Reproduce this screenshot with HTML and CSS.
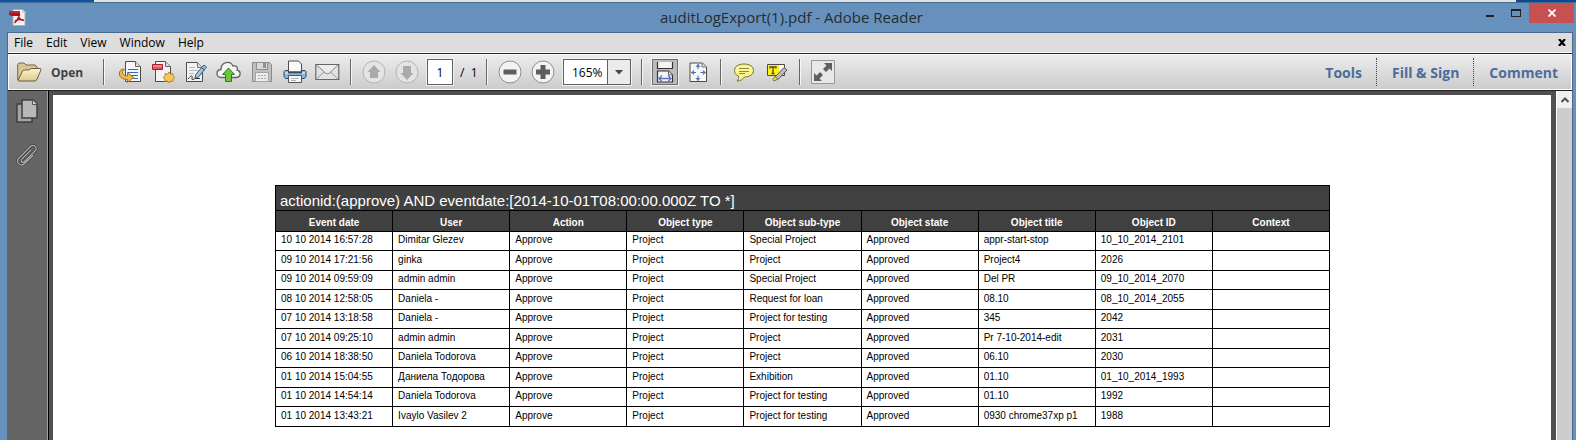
FILE: index.html
```html
<!DOCTYPE html>
<html lang="en">
<head>
<meta charset="utf-8">
<title>auditLogExport(1).pdf - Adobe Reader</title>
<link rel="stylesheet" href="styles.css">
</head>
<body>
<div class="desktop"></div>
<div class="window">
  <header class="titlebar">
    <svg class="app-icon" width="17" height="17" viewBox="0 0 17 17"><path d="M4 .5h9l3 3v13H4z" fill="#f8f4f4" stroke="#b9a9ae"/><path d="M13 0l4 4h-4z" fill="#d8d0d4"/><path d="M0 2h11v5H2L0 5.500z" fill="#b0141c"/><path d="M0 2h11v2H0z" fill="#c92a30"/><path d="M9.500 5c1 2-.5 6-4 9M9.500 6c.2 3 2 5 5.500 5.500M6 12c2-1.500 5-2 9-.8" fill="none" stroke="#a8101a" stroke-width="1.400"/></svg>
    <h1 class="title">auditLogExport(1).pdf - Adobe Reader</h1>
    <div class="controls">
      <button class="control" aria-label="Minimize"><svg width="10" height="10"><path d="M1 7h8v2H1z" fill="#222"/></svg></button>
      <button class="control" aria-label="Maximize"><svg width="10" height="10"><path d="M0 1h10v8H0zM1 3v5h8V3z" fill="#222" fill-rule="evenodd"/></svg></button>
      <button class="control close" aria-label="Close"><svg width="8" height="8"><path d="M.5 .5l7 7m0-7l-7 7" stroke="#fff" stroke-width="1.800"/></svg></button>
    </div>
  </header>
  <div class="frame">
    <nav class="menubar">
      <button class="menu">File</button><button class="menu">Edit</button><button class="menu">View</button><button class="menu">Window</button><button class="menu">Help</button>
      <button class="doc-close" aria-label="Close document"><svg width="8" height="7"><path d="M1 0l6 7M7 0L1 7" stroke="#000" stroke-width="2.200"/></svg></button>
    </nav>
    <div class="toolbar">
      <button class="open">
        <svg width="25" height="20" viewBox="0 0 25 20"><defs><linearGradient id="fold" x2="0" y2="1"><stop stop-color="#fdf6cf"/><stop offset="1" stop-color="#dfc98a"/></linearGradient></defs><path d="M.7 18V2.500L2 1h5l2 2h9l2 2v4" fill="#d8c692" stroke="#75664a"/><path d="M1 18.500L5.500 9l1.500-1h5l2-1.500h9.500L24 8l-4.500 10-1 1H1.500z" fill="url(#fold)" stroke="#6b5d42"/></svg>
        <span>Open</span>
      </button>
      <span class="sep"></span>
      <div class="group">
        <button class="tool" aria-label="Convert file"><svg width="24" height="24" viewBox="0 0 24 24"><path d="M7.500 1.500h10l5 5v15h-15z" fill="#f5f7fa" stroke="#4c4c4c"/><path d="M17.500 1.500v5h5" fill="#ddd" stroke="#666"/><path d="M10 9.500h10M10 12.500h10M12 15.500h8M15 18.500h5" stroke="#2c6fb7" stroke-width="1.200"/><path d="M4.500 9C2 10 1 12 1.500 15c.7 3 4 4.500 8 4.500v3l6-5-6-5v3.500C6 16 4 14.500 4.500 11l2-1.500z" fill="#f3bc42" stroke="#a66e18"/></svg></button>
        <button class="tool" aria-label="Create PDF"><svg width="24" height="24" viewBox="0 0 24 24"><path d="M4.500 1.500h10l5 5v15h-15z" fill="#f3f3f3" stroke="#4c4c4c"/><path d="M14.500 1.500v5h5" fill="#ddd" stroke="#666"/><path d="M1.500 4.500h10v5h-10z" fill="#ee5059" stroke="#9d252d"/><path d="M2 5h9v2H2z" fill="#f58086"/><path d="M18 12l1.500 2.200 2.500-.7v2.600l2 1.400-2 1.500v2.500l-2.500-.5L18 23l-1.500-2-2.500.5V19l-2-1.500 2-1.400v-2.600l2.500.7z" fill="#f5c85a" stroke="#b07b20" stroke-width=".8"/></svg></button>
        <button class="tool" aria-label="Sign"><svg width="24" height="24" viewBox="0 0 24 24"><path d="M2.500 2.500h11l5 5v14h-16z" fill="#f3f3f3" stroke="#4c4c4c"/><path d="M13.500 2.500v5h5" fill="#ddd" stroke="#777"/><path d="M5 7.500h6M5 10.500h9M5 13.500h5" stroke="#b8b8b8"/><path d="M4 19c3-4 5-4 4-1s2 .5 4 .5h4" fill="none" stroke="#333"/><path d="M20 5l2.500 2-8 10-3.500 1.500.8-4z" fill="#a9c8e4" stroke="#34536f"/><path d="M18 8l2.500 2" stroke="#34536f"/></svg></button>
        <button class="tool" aria-label="Upload"><svg width="25" height="24" viewBox="0 0 25 24"><path d="M6 17.500C-.5 17.500-.5 10 5 9.500 5 2 14 0 17 6c4-1 5 2 4 4 4.500 1 4 7.500-1 7.500z" fill="#f4f4f4" stroke="#646464" stroke-width="1.300"/><path d="M12.500 8l6 6.500h-3v7h-6v-7h-3z" fill="#6fc638" stroke="#2f7c16"/></svg></button>
        <button class="tool" aria-label="Save" disabled><svg width="24" height="24" viewBox="0 0 24 24"><path d="M2.500 2.500h17l2 2v17h-19z" fill="#bfbfbf" stroke="#8b8b8b"/><path d="M6.500 2.500h11v7h-11z" fill="#d9d9d9" stroke="#8f8f8f"/><path d="M13 3h3v5h-3z" fill="#8f8f8f"/><path d="M5.500 12.500h13v9h-13z" fill="#ececec" stroke="#a5a5a5"/><path d="M8 15.500h8M8 18.500h8" stroke="#aaa" stroke-dasharray="2 1"/></svg></button>
        <button class="tool" aria-label="Print"><svg width="24" height="24" viewBox="0 0 24 24"><path d="M2 10.500h20l1 1v5l-1.500 2h-19l-1.500-2v-5z" fill="#8fb5db" stroke="#354d64"/><path d="M2 12h20v2H2z" fill="#c4dcf0"/><path d="M5.500 1h10l3 3v8h-13z" fill="#fafafa" stroke="#4b4b4b"/><path d="M5 12.500h14" stroke="#3f4d5a" stroke-width="2"/><path d="M5.500 15.500h13v7h-13z" fill="#f7f7f7" stroke="#555"/><path d="M8 18.500h8M8 20.500h5" stroke="#b3b3b3"/></svg></button>
        <button class="tool" aria-label="Email"><svg width="25" height="24" viewBox="0 0 25 24"><path d="M.8 4.500h23v15H.8z" fill="#e1e1e1" stroke="#666" stroke-width="1.200"/><path d="M1.500 19l8-7.500M23 19l-8-7.500" stroke="#999"/><path d="M1.500 5l9 8q2 1.500 4 0l8.500-8" fill="#ededed" stroke="#858585"/></svg></button>
      </div>
      <span class="sep"></span>
      <div class="group">
        <button class="tool" aria-label="Previous page" disabled><svg width="24" height="24" viewBox="0 0 24 24"><circle cx="12" cy="12" r="11" fill="#e4e4e4" stroke="#b3b3b3"/><path d="M12 5l6.500 7H16v6H8v-6H5.500z" fill="#aaa"/></svg></button>
        <button class="tool" aria-label="Next page" disabled><svg width="24" height="24" viewBox="0 0 24 24"><circle cx="12" cy="12" r="11" fill="#e4e4e4" stroke="#b3b3b3"/><path d="M12 20l6.500-7H16V6H8v7H5.500z" fill="#aaa"/></svg></button>
        <input class="page-number" type="text" value="1" aria-label="Page number">
        <span class="page-total">/&nbsp; 1</span>
      </div>
      <span class="sep"></span>
      <div class="group">
        <button class="tool" aria-label="Zoom out"><svg width="24" height="24" viewBox="0 0 24 24"><circle cx="12" cy="12" r="11" fill="#f3f3f3" stroke="#8e8e8e"/><path d="M5.500 9.500h13v5h-13z" fill="#5d5d5d"/></svg></button>
        <button class="tool" aria-label="Zoom in"><svg width="24" height="24" viewBox="0 0 24 24"><circle cx="12" cy="12" r="11" fill="#f3f3f3" stroke="#8e8e8e"/><path d="M9.500 5h5v4.500H19v5h-4.500V19h-5v-4.500H5v-5h4.500z" fill="#5d5d5d"/></svg></button>
        <div class="zoom">
          <select class="zoom-level" aria-label="Zoom level"><option>165%</option></select>
          <span class="zoom-arrow"><svg width="8" height="5"><path d="M0 0h8L4 4.500z" fill="#444"/></svg></span>
        </div>
      </div>
      <span class="sep"></span>
      <div class="group">
        <button class="tool pressed" aria-label="Fit width"><svg width="24" height="24" viewBox="0 0 24 24"><path d="M4.500 2v6.500h15V2" fill="#f4f4f4" stroke="#333" stroke-width="1.200"/><path d="M4.500 22v-11h11l4 4v7z" fill="#f4f4f4" stroke="#333" stroke-width="1.200"/><path d="M15.500 11v4h4" fill="#ddd" stroke="#666"/><path d="M6 18.500h12M9 15.500l-3 3 3 3M15 15.500l3 3-3 3" fill="none" stroke="#5a75b8" stroke-width="1.300"/></svg></button>
        <button class="tool" aria-label="Fit page"><svg width="24" height="24" viewBox="0 0 24 24"><path d="M4 3h12.500l4 4v14.500H4z" fill="#f7f7f7" stroke="#4b4b4b"/><path d="M16 3v4h4" fill="#ddd" stroke="#777"/><path d="M12 4v5M12 15.500v5M5 12.500h5M14.500 12.500h5" stroke="#4868ad"/><path d="M9.500 7L12 4l2.500 3zM9.500 18l2.500 3 2.500-3zM8 10l-3 2.500L8 15zM17 10l3 2.500-3 2.500z" fill="#5b78ba"/></svg></button>
      </div>
      <span class="sep"></span>
      <div class="group">
        <button class="tool" aria-label="Add comment"><svg width="24" height="24" viewBox="0 0 24 24"><path d="M12 4c6 0 9.500 2.800 9.500 6.500S18 17 12.500 17c-2 2.500-4 4-7.500 4 1.500-1.500 2-3 1.500-5C4 15 2.500 13 2.500 10.500 2.500 6.800 6 4 12 4z" fill="#fbf58e" stroke="#77713c"/><path d="M7 8.500h10M7 11.500h10M7 13.500h6" stroke="#8d8751"/></svg></button>
        <button class="tool" aria-label="Highlight text"><svg width="24" height="24" viewBox="0 0 24 24"><path d="M2.500 4.500h17v11h-17z" fill="#fafafa" stroke="#4b4b4b"/><path d="M3 5h11v10H3z" fill="#fff21c"/><path d="M5 7h6v1.500M8 7v6.500M6.500 13.500h3M5 6.500v2" fill="none" stroke="#514811" stroke-width="1.300"/><path d="M19 7.500l3 2.500-9 9.500-3-2.500z" fill="#bbb" stroke="#555"/><path d="M10 16.500l3 2.500-4 2-1-1.500z" fill="#f2e533" stroke="#77713c"/></svg></button>
      </div>
      <span class="sep"></span>
      <button class="tool" aria-label="Read mode"><svg width="24" height="24" viewBox="0 0 24 24"><path d="M.5 .5h23v23H.5z" fill="#e8e8e8" stroke="#979797"/><path d="M13 3h8v8l-2.500-2.500-3.500 3.500-3-3 3.500-3.500zM3 21v-8l2.500 2.500L9 12l3 3-3.500 3.500L11 21z" fill="#606060"/></svg></button>
      <div class="panels">
        <button class="panel">Tools</button>
        <button class="panel">Fill &amp; Sign</button>
        <button class="panel">Comment</button>
      </div>
    </div>
    <div class="workspace">
      <aside class="sidebar">
        <button class="side" aria-label="Page thumbnails"><svg width="22" height="24" viewBox="0 0 22 24"><path d="M1 5h15v18H1z" fill="#a5a5a5" stroke="#3f3f3f" stroke-width="1.500"/><path d="M6 1h11l4 4v14H6z" fill="#b8b8b8" stroke="#3f3f3f" stroke-width="1.500"/><path d="M16.500 1v4.500H21" fill="#d0d0d0" stroke="#555"/></svg></button>
        <button class="side" aria-label="Attachments"><svg width="22" height="24" viewBox="0 0 22 24"><g fill="none" stroke-linecap="round"><path d="M15 7L6 16c-2 2.500.5 4.500 2.500 2.500L19 8c3-3.500-1-7.500-4.500-4.500L3 15c-4 4.500 1.500 9.500 5.500 5.500L17 12.500" stroke="#3c3c3c" stroke-width="2.600"/><path d="M15 7L6 16c-2 2.500.5 4.500 2.500 2.500L19 8c3-3.500-1-7.500-4.500-4.500L3 15c-4 4.500 1.500 9.500 5.500 5.500L17 12.500" stroke="#b0b0b0" stroke-width="1.200"/></g></svg></button>
      </aside>
      <main class="viewer">
        <div class="page">
          <table class="log">
            <thead>
              <tr class="query"><th colspan="9">actionid:(approve) AND eventdate:[2014-10-01T08:00:00.000Z TO *]</th></tr>
              <tr class="heads"><th>Event date</th><th>User</th><th>Action</th><th>Object type</th><th>Object sub-type</th><th>Object state</th><th>Object title</th><th>Object ID</th><th>Context</th></tr>
            </thead>
            <tbody>
              <tr><td>10 10 2014 16:57:28</td><td>Dimitar Glezev</td><td>Approve</td><td>Project</td><td>Special Project</td><td>Approved</td><td>appr-start-stop</td><td>10_10_2014_2101</td><td></td></tr>
              <tr><td>09 10 2014 17:21:56</td><td>ginka</td><td>Approve</td><td>Project</td><td>Project</td><td>Approved</td><td>Project4</td><td>2026</td><td></td></tr>
              <tr><td>09 10 2014 09:59:09</td><td>admin admin</td><td>Approve</td><td>Project</td><td>Special Project</td><td>Approved</td><td>Del PR</td><td>09_10_2014_2070</td><td></td></tr>
              <tr><td>08 10 2014 12:58:05</td><td>Daniela -</td><td>Approve</td><td>Project</td><td>Request for loan</td><td>Approved</td><td>08.10</td><td>08_10_2014_2055</td><td></td></tr>
              <tr><td>07 10 2014 13:18:58</td><td>Daniela -</td><td>Approve</td><td>Project</td><td>Project for testing</td><td>Approved</td><td>345</td><td>2042</td><td></td></tr>
              <tr><td>07 10 2014 09:25:10</td><td>admin admin</td><td>Approve</td><td>Project</td><td>Project</td><td>Approved</td><td>Pr 7-10-2014-edit</td><td>2031</td><td></td></tr>
              <tr><td>06 10 2014 18:38:50</td><td>Daniela Todorova</td><td>Approve</td><td>Project</td><td>Project</td><td>Approved</td><td>06.10</td><td>2030</td><td></td></tr>
              <tr><td>01 10 2014 15:04:55</td><td>Даниела Тодорова</td><td>Approve</td><td>Project</td><td>Exhibition</td><td>Approved</td><td>01.10</td><td>01_10_2014_1993</td><td></td></tr>
              <tr><td>01 10 2014 14:54:14</td><td>Daniela Todorova</td><td>Approve</td><td>Project</td><td>Project for testing</td><td>Approved</td><td>01.10</td><td>1992</td><td></td></tr>
              <tr><td>01 10 2014 13:43:21</td><td>Ivaylo Vasilev 2</td><td>Approve</td><td>Project</td><td>Project for testing</td><td>Approved</td><td>0930 chrome37xp p1</td><td>1988</td><td></td></tr>
            </tbody>
          </table>
        </div>
      </main>
      <div class="scrollbar">
        <button class="scroll-up" aria-label="Scroll up"><svg width="8" height="6"><path d="M.5 5L4 1.500 7.500 5" fill="none" stroke="#505050" stroke-width="2"/></svg></button>
        <div class="thumb"></div>
      </div>
    </div>
  </div>
</div>
</body>
</html>
```
FILE: styles.css
```css
* { box-sizing: border-box; }

body {
  margin: 0;
  height: 100vh;
  display: flex;
  flex-direction: column;
  overflow: hidden;
  font-family: "Open Sans", "Noto Sans", sans-serif;
  font-size: 12px;
  color: #000;
}

button, input, select { font: inherit; color: inherit; margin: 0; padding: 0; border: 0; background: none; }
svg { display: block; flex: none; }

.desktop {
  flex: none;
  height: 2px;
  background: linear-gradient(90deg, #0d55a3 94px, #dfe3e6 94px, #dfe3e6 calc(100% - 60px), #0d478f calc(100% - 60px));
}

.window {
  flex: 1;
  min-height: 0;
  display: flex;
  flex-direction: column;
  background: #6791bd;
  border-top: 1px solid #486b91;
}

.titlebar {
  flex: none;
  height: 29px;
  display: grid;
  grid-template-columns: 1fr auto 1fr;
  padding: 0 2px 0 9px;
}
.app-icon { margin-top: 6px; }
.title { margin: 0; font-size: 15px; line-height: 29px; font-weight: 400; color: #262c33; }
.controls { display: flex; justify-content: flex-end; }
.control { width: 26px; height: 20px; display: flex; align-items: center; justify-content: center; }
.control.close { width: 45px; background: #c75050; }

.frame {
  flex: 1;
  min-height: 0;
  display: flex;
  flex-direction: column;
  margin: 0 3px 0 7px;
  border: 1px solid #49698e;
  border-bottom: 0;
}

.menubar {
  flex: none;
  height: 20px;
  display: flex;
  align-items: center;
  gap: 13px;
  padding: 0 6px;
  background: #dddddd;
  border-bottom: 1px solid #fff;
}
.doc-close { margin-left: auto; }

.toolbar {
  flex: none;
  height: 38px;
  display: flex;
  align-items: center;
  border: 1px solid #222;
  border-width: 1px 0;
  box-shadow: inset 0 0 0 1px #fff;
  background: linear-gradient(#ededed, #cbcbcb);
}
.group { display: flex; align-items: center; }
.open { display: flex; align-items: center; gap: 9px; width: 95px; padding-left: 9px; font-weight: 700; color: #414141; }
.sep { width: 2px; height: 26px; margin: 0 5px 0 6px; border-left: 1px solid #666; border-right: 1px solid #f6f6f6; }
.open + .sep { margin: 0 8px 0 0; }
.tool { width: 33px; height: 26px; display: flex; align-items: center; justify-content: center; }
.tool.pressed { width: 26px; margin: 0 3px 0 4px; background: #bcbcbc; border: 1px solid #6c6c6c; outline: 1px solid #f4f4f4; }

.page-number {
  width: 26px;
  height: 26px;
  margin-left: 4px;
  text-align: center;
  background: #fff;
  border: 1px solid #606060;
  outline: 1px solid #f4f4f4;
}
.page-total { width: 27px; padding-left: 7px; }

.zoom {
  width: 68px;
  height: 26px;
  margin: 0 4px;
  display: grid;
  grid-template-columns: 1fr 23px;
  border: 1px solid #606060;
  outline: 1px solid #f4f4f4;
  background: #fff;
}
.zoom-level { grid-area: 1 / 1 / 2 / 3; appearance: none; padding-left: 8px; }
.zoom-arrow {
  grid-area: 1 / 2;
  display: flex;
  align-items: center;
  justify-content: center;
  background: #ebebeb;
  border-left: 1px solid #606060;
  pointer-events: none;
}

.panels { margin-left: auto; display: flex; }
.panel { height: 28px; padding: 0 14px 0 15px; font-size: 14px; font-weight: 700; color: #4c6d9b; }
.panel + .panel { border-left: 1px dotted #444; }

.workspace { flex: 1; min-height: 0; display: flex; background: #505050; }
.sidebar {
  flex: none;
  width: 41px;
  display: flex;
  flex-direction: column;
  align-items: center;
  gap: 20px;
  padding: 8px 3px 0 0;
  background: #656565;
  border-right: 1px solid #000;
  box-shadow: inset -1px 0 #a0a0a0;
}

.viewer { flex: 1; min-width: 0; display: flex; padding: 4px 5px 0 4px; }
.page { flex: 1; padding: 90px 221px 0 222px; background: #fff; }

.log {
  width: 100%;
  table-layout: fixed;
  border-collapse: collapse;
  font-family: "Liberation Sans", Arial, sans-serif;
  font-size: 10px;
  line-height: 12px;
}
.log th, .log td { border: 1px solid #000; padding: 0 4px; white-space: nowrap; }
.log th { background: #404040; color: #fff; }
.log td { padding-left: 5px; padding-bottom: 2px; }
.query { height: 25px; }
.log .query th { padding-top: 6px; text-align: left; font-size: 15px; line-height: 18px; font-weight: 400; }
.heads { height: 21px; }
.log .heads th { padding-top: 3px; }
.log tbody tr { height: 20px; }
.log tbody tr:nth-child(odd) { height: 19px; }

.scrollbar { flex: none; width: 16px; display: flex; flex-direction: column; background: #fff; padding: 0 0 0 1px; }
.scroll-up { height: 17px; display: flex; align-items: center; justify-content: center; background: #f0f0f0; }
.thumb { flex: 1; background: #cdcdcd; }
```
